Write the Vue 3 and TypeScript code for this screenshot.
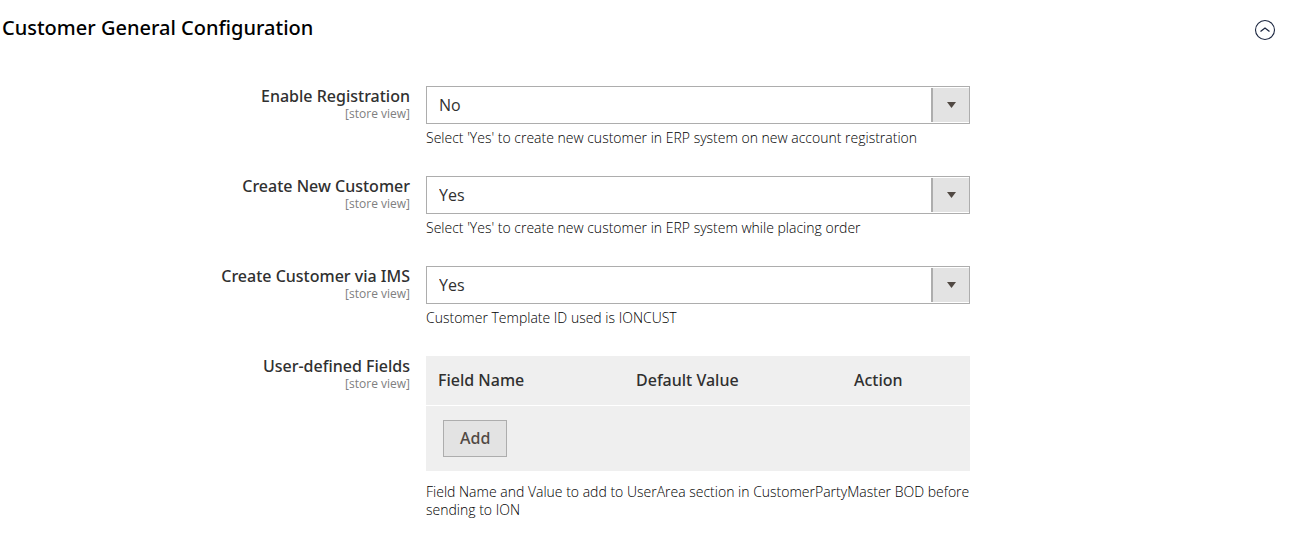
<script setup lang="ts">
import { reactive, ref } from 'vue'

interface SelectField {
  id: string
  label: string
  value: string
  note: string
}

const open = ref(true)

const fields = reactive<SelectField[]>([
  {
    id: 'enable-registration',
    label: 'Enable Registration',
    value: 'No',
    note: "Select 'Yes' to create new customer in ERP system on new account registration",
  },
  {
    id: 'create-customer',
    label: 'Create New Customer',
    value: 'Yes',
    note: "Select 'Yes' to create new customer in ERP system while placing order",
  },
  {
    id: 'create-via-ims',
    label: 'Create Customer via IMS',
    value: 'Yes',
    note: 'Customer Template ID used is IONCUST',
  },
])
</script>

<template>
  <section class="config">
    <header class="head">
      <h2 class="title">Customer General Configuration</h2>
      <button
        class="toggle"
        type="button"
        aria-label="Toggle section"
        :aria-expanded="open"
        @click="open = !open"
      >
        <svg width="22" height="22" viewBox="0 0 22 22" fill="none" stroke="#1c2740">
          <circle cx="11" cy="11" r="9.5" stroke-width="1.1" />
          <path d="M6.5 12.6 11 9.1l4.5 3.5" stroke-width="1.3" />
        </svg>
      </button>
    </header>

    <div v-if="open" class="rows">
      <div v-for="field in fields" :key="field.id" class="row">
        <div class="name">
          <label class="label" :for="field.id">{{ field.label }}</label>
          <span class="scope">[store view]</span>
        </div>
        <div class="value">
          <div class="select-box">
            <select :id="field.id" v-model="field.value" class="select">
              <option>Yes</option>
              <option>No</option>
            </select>
            <span class="arrow">
              <svg width="10" height="6" viewBox="0 0 10 6"><path d="M1 0h9L5.5 6z" fill="#514943" /></svg>
            </span>
          </div>
          <p class="note">{{ field.note }}</p>
        </div>
      </div>

      <div class="row">
        <div class="name">
          <span id="user-fields" class="label">User-defined Fields</span>
          <span class="scope">[store view]</span>
        </div>
        <div class="value">
          <table class="table" aria-labelledby="user-fields">
            <colgroup>
              <col class="col-name" />
              <col class="col-default" />
              <col />
            </colgroup>
            <thead>
              <tr>
                <th>Field Name</th>
                <th>Default Value</th>
                <th>Action</th>
              </tr>
            </thead>
            <tbody>
              <tr>
                <td colspan="3"><button class="add" type="button">Add</button></td>
              </tr>
            </tbody>
          </table>
          <p class="note table-note">
            Field Name and Value to add to UserArea section in CustomerPartyMaster BOD before sending to ION
          </p>
        </div>
      </div>
    </div>
  </section>
</template>

<style>
body {
  margin: 0;
  background: #fff;
}
</style>

<style scoped>
.config {
  font-family: 'Open Sans', 'Noto Sans', sans-serif;
  color: #303030;
}

.head {
  display: flex;
  justify-content: space-between;
  align-items: flex-start;
  padding: 16px 30px 0 2px;
}

.title {
  margin: 0;
  font-family: 'Noto Sans', sans-serif;
  font-size: 20px;
  line-height: 24px;
  font-weight: 500;
  color: #000;
}

.toggle {
  margin: 3px 0 0;
  padding: 0;
  border: 0;
  background: none;
  cursor: pointer;
}

.toggle svg {
  display: block;
}

.rows {
  display: flex;
  flex-direction: column;
  gap: 29px;
  padding-top: 45px;
}

.row {
  display: grid;
  grid-template-columns: 426fr 544fr 336fr;
}

.name {
  display: flex;
  flex-direction: column;
  align-items: flex-end;
  padding-right: 16px;
}

.label {
  font-family: 'Noto Sans', sans-serif;
  font-size: 16px;
  line-height: 20px;
  font-weight: 500;
}

.scope {
  font-size: 12px;
  line-height: 16px;
  color: #808080;
}

.select-box {
  position: relative;
}

.select {
  display: block;
  width: 100%;
  height: 38px;
  padding: 0 50px 0 12px;
  border: 1px solid #adadad;
  border-radius: 0;
  background: #fff;
  appearance: none;
  color: #303030;
  font-family: inherit;
  font-size: 16px;
}

.arrow {
  position: absolute;
  top: 2px;
  right: 1px;
  bottom: 2px;
  box-sizing: border-box;
  width: 38px;
  display: flex;
  align-items: center;
  justify-content: center;
  border-left: 2px solid #adadad;
  background: #e3e3e3;
  pointer-events: none;
}

.note {
  margin: 5px 0 0;
  font-size: 14px;
  line-height: 18px;
  font-weight: 300;
  color: #000;
}

.table {
  width: 100%;
  border-collapse: collapse;
  table-layout: fixed;
  background: #efefef;
}

.col-name {
  width: 198px;
}

.col-default {
  width: 218px;
}

.table th {
  height: 47px;
  padding: 0 12px 2px;
  border-bottom: 1px solid #fff;
  text-align: left;
  font-family: 'Noto Sans', sans-serif;
  font-size: 16px;
  line-height: 20px;
  font-weight: 500;
}

.table td {
  padding: 14px 17px;
}

.add {
  display: block;
  height: 37px;
  padding: 0 16px 2px;
  border: 1px solid #adadad;
  background: #e3e3e3;
  color: #514943;
  font-family: 'Noto Sans', sans-serif;
  font-size: 16px;
  font-weight: 500;
}

.table-note {
  margin-top: 12px;
}
</style>
